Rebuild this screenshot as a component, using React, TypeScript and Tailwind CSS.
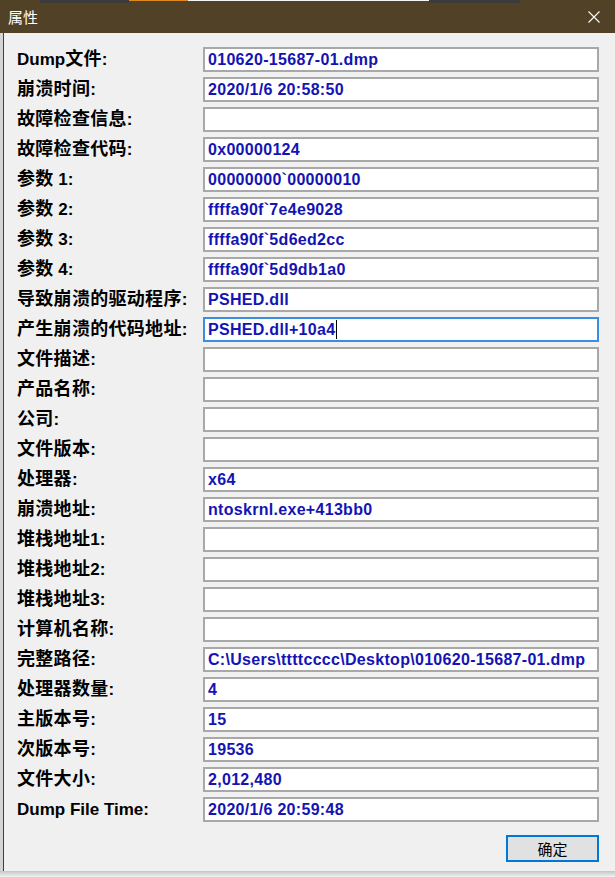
import React from "react";

type Row = { label: string; value?: string; focused?: boolean };

const rows: Row[] = [
  { label: "Dump文件:", value: "010620-15687-01.dmp" },
  { label: "崩溃时间:", value: "2020/1/6 20:58:50" },
  { label: "故障检查信息:" },
  { label: "故障检查代码:", value: "0x00000124" },
  { label: "参数 1:", value: "00000000`00000010" },
  { label: "参数 2:", value: "ffffa90f`7e4e9028" },
  { label: "参数 3:", value: "ffffa90f`5d6ed2cc" },
  { label: "参数 4:", value: "ffffa90f`5d9db1a0" },
  { label: "导致崩溃的驱动程序:", value: "PSHED.dll" },
  { label: "产生崩溃的代码地址:", value: "PSHED.dll+10a4", focused: true },
  { label: "文件描述:" },
  { label: "产品名称:" },
  { label: "公司:" },
  { label: "文件版本:" },
  { label: "处理器:", value: "x64" },
  { label: "崩溃地址:", value: "ntoskrnl.exe+413bb0" },
  { label: "堆栈地址1:" },
  { label: "堆栈地址2:" },
  { label: "堆栈地址3:" },
  { label: "计算机名称:" },
  { label: "完整路径:", value: "C:\\Users\\ttttcccc\\Desktop\\010620-15687-01.dmp" },
  { label: "处理器数量:", value: "4" },
  { label: "主版本号:", value: "15" },
  { label: "次版本号:", value: "19536" },
  { label: "文件大小:", value: "2,012,480" },
  { label: "Dump File Time:", value: "2020/1/6 20:59:48" },
];

// CJK runs get their own size so the pitch matches the old bitmap font
function Label({ text }: { text: string }) {
  const parts = text.split(/([\u4e00-\u9fff]+)/).filter(Boolean);
  return (
    <span className="whitespace-pre text-[17px] font-bold text-black leading-none">
      {parts.map((p, i) =>
        /[\u4e00-\u9fff]/.test(p) ? (
          <span key={i} className="text-[18px] tracking-[0.3px]">
            {p}
          </span>
        ) : (
          <span key={i}>{p}</span>
        )
      )}
    </span>
  );
}

function Field({ value, focused }: { value?: string; focused?: boolean }) {
  return (
    <div
      className={`h-[25px] w-[396px] bg-white border-2 flex items-center pl-[3px] overflow-hidden ${
        focused ? "border-[#3a8ee0]" : "border-[#a8a8a8]"
      }`}
    >
      <span className="text-[16px] font-bold text-[#1414b4] tracking-[0.3px] whitespace-pre leading-none">
        {value}
      </span>
      {focused && <span className="w-px h-[19px] bg-black ml-px" />}
    </div>
  );
}

export default function App() {
  return (
    <div
      className="relative w-[615px] h-[877px] overflow-hidden bg-[#ececec] flex flex-col"
      style={{ fontFamily: '"Liberation Sans", "Noto Sans CJK SC", sans-serif' }}
    >
      {/* title bar */}
      <div className="relative h-[33px] shrink-0 bg-[#514126] flex items-center justify-between pl-2 pr-[15px]">
        <span
          className="text-white text-[15px] leading-none"
          style={{ fontFamily: '"Noto Sans CJK SC", sans-serif' }}
        >
          属性
        </span>
        <svg width="12" height="12" viewBox="0 0 12 12" className="text-white">
          <path d="M0.5 0.5L11.5 11.5M11.5 0.5L0.5 11.5" stroke="currentColor" strokeWidth="1.1" />
        </svg>

        {/* bits of the window behind peeking over the top edge */}
        <div className="absolute top-0 left-[40px] w-[89px] h-[3px] bg-[#3b3b3b]" />
        <div className="absolute top-0 left-[129px] w-[59px] h-px bg-[#e08a1e]" />
        <div className="absolute top-0 left-[188px] w-[241px] h-px bg-[#f4f4f4]" />
        <div className="absolute top-0 left-[429px] w-[91px] h-[3px] bg-[#3b3b3b]" />
      </div>

      <div className="flex h-[838px] shrink-0">
        <div className="w-[3px] bg-[#d4d4d4]" />
        <div className="flex-1 bg-[#f0f0f0] border-l border-[#4a3c25] pl-[13px] pt-[14px]">
          <div className="flex flex-col gap-[5px]">
            {rows.map((r, i) => (
              <div key={i} className="flex items-center h-[25px]">
                <div className="w-[186px] shrink-0">
                  <Label text={r.label} />
                </div>
                <Field value={r.value} focused={r.focused} />
              </div>
            ))}
          </div>
          <div className="flex justify-end w-[582px] mt-[13px]">
            <button
              className="w-[93px] h-[27px] bg-[#e1e1e1] border-2 border-[#0078d7] text-[15px] text-black leading-none"
              style={{ fontFamily: '"Noto Sans CJK SC", sans-serif' }}
            >
              确定
            </button>
          </div>
        </div>
      </div>

      <div className="flex-1 bg-gradient-to-b from-[#c4c4c4] to-[#f2f2f2]" />
    </div>
  );
}
